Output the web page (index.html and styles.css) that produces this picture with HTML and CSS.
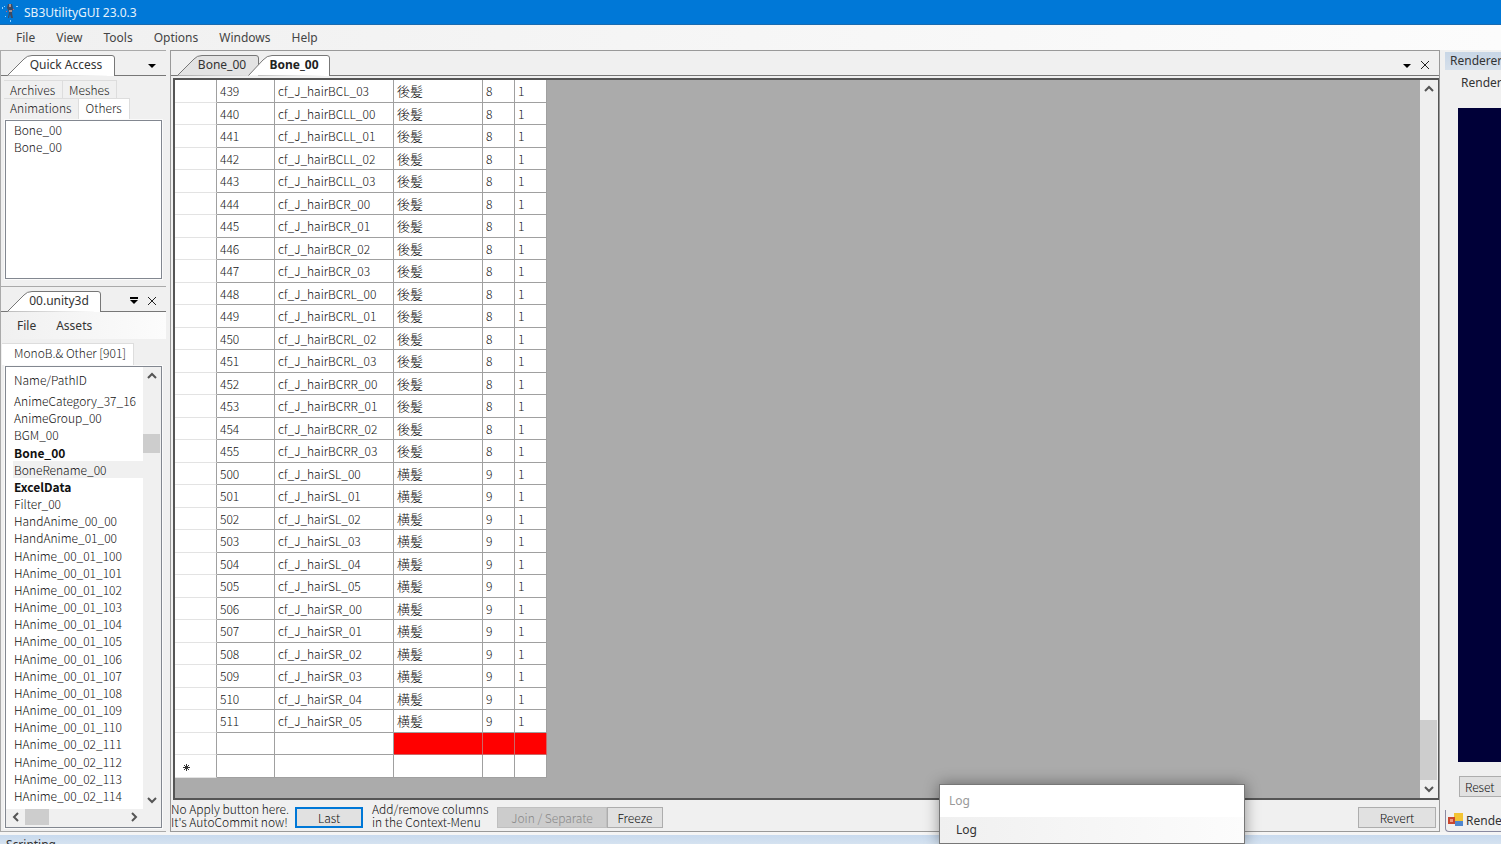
FILE: index.html
```html
<!DOCTYPE html>
<html lang="en">
<head>
  <meta charset="UTF-8">
  <meta name="viewport" content="width=device-width, initial-scale=1.0">
  <title>SB3UtilityGUI 23.0.3</title>
  <link rel="stylesheet" href="styles.css">
</head>
<body>
  <header class="titlebar">
    <svg class="app-icon" width="18" height="22" viewBox="0 0 18 22">
      <path d="M8 3h4l1 4-1 5 1 5h-2l-1-4-1 4H8l1-6-2-4z" fill="#3d4a63"/>
      <path d="M9 3h2v3H9zM9 9h3v2H9z" fill="#a98f8a"/>
      <path d="M2 6h1v2H2zM4 5h1v1H4zM16 5h2v1h-2zM10 19h1v2h-1zM5 15h1v1H5z" fill="#8fd0ff"/>
      <path d="M13 8h1v1h-1zM6 10h1v1H6z" fill="#d8596b"/>
    </svg>
    <h1>SB3UtilityGUI 23.0.3</h1>
  </header>

  <nav class="menubar">
    <button>File</button>
    <button>View</button>
    <button>Tools</button>
    <button>Options</button>
    <button>Windows</button>
    <button>Help</button>
  </nav>

  <main class="workspace">
    <!-- Left side: quick access and opened file -->
    <aside class="left">
      <section class="dock quick">
        <div class="dock-tabs">
          <button class="doc-tab">
            <svg class="tab-shape" width="108" height="21" viewBox="0 0 108 21"><path d="M.5 20.5 17 4Q20 .5 25 .5H105Q107.500 .5 107.500 3V21" /></svg>
            <span>Quick Access</span>
          </button>
          <div class="dock-tools">
            <button aria-label="Window list"><svg width="10" height="10"><path d="M1 4h8L5 8z"/></svg></button>
          </div>
        </div>
        <div class="mini-tabs">
          <button>Archives</button><button>Meshes</button>
        </div>
        <div class="mini-tabs second">
          <button>Animations</button><button class="active">Others</button>
        </div>
        <ul class="listbox quick-list">
          <li>Bone_00</li>
          <li>Bone_00</li>
        </ul>
      </section>

      <section class="dock file">
        <div class="dock-tabs">
          <button class="doc-tab">
            <svg class="tab-shape" width="94" height="21" viewBox="0 0 94 21"><path d="M.5 20.5 17 4Q20 .5 25 .5H91Q93.500 .5 93.500 3V21" /></svg>
            <span>00.unity3d</span>
          </button>
          <div class="dock-tools">
            <button aria-label="Window list"><svg width="10" height="10"><path d="M1 1h8v2H1zM1 4h8L5 8z"/></svg></button>
            <button aria-label="Close"><svg width="10" height="10"><path class="line" d="M1 1l8 8M9 1l-8 8"/></svg></button>
          </div>
        </div>
        <nav class="file-menu">
          <button>File</button>
          <button>Assets</button>
        </nav>
        <div class="mini-tabs page">
          <button class="active">MonoB.&amp; Other [901]</button>
        </div>
        <div class="listbox asset-box">
          <div class="asset-view">
            <div class="asset-head">Name/PathID</div>
            <ul class="asset-list" id="assetList"></ul>
          </div>
          <div class="vscroll">
            <button aria-label="Up"><svg width="10" height="8"><path class="arrow" d="M1 6l4-4 4 4"/></svg></button>
            <div class="track asset-track"><div class="thumb"></div></div>
            <button aria-label="Down"><svg width="10" height="8"><path class="arrow" d="M1 2l4 4 4-4"/></svg></button>
          </div>
          <div class="hscroll">
            <button aria-label="Left"><svg width="8" height="10"><path class="arrow" d="M6 1L2 5l4 4"/></svg></button>
            <div class="track"><div class="thumb"></div></div>
            <button aria-label="Right"><svg width="8" height="10"><path class="arrow" d="M2 1l4 4-4 4"/></svg></button>
          </div>
        </div>
      </section>
    </aside>

    <!-- Centre: spreadsheet -->
    <section class="document">
      <div class="dock-tabs">
        <button class="doc-tab inactive">
          <svg class="tab-shape" width="82" height="21" viewBox="0 0 82 21"><path d="M.5 20.5 17 4Q20 .5 25 .5H79Q81.500 .5 81.500 3V21" /></svg>
          <span>Bone_00</span>
        </button>
        <button class="doc-tab current">
          <svg class="tab-shape" width="82" height="21" viewBox="0 0 82 21"><path d="M.5 20.5 15 5Q19 .5 24 .5H79Q81.500 .5 81.500 3V21" /></svg>
          <span>Bone_00</span>
        </button>
        <div class="dock-tools">
          <button aria-label="Window list"><svg width="10" height="10"><path d="M1 4h8L5 8z"/></svg></button>
          <button aria-label="Close"><svg width="10" height="10"><path class="line" d="M1 1l8 8M9 1l-8 8"/></svg></button>
        </div>
      </div>

      <div class="grid-box">
        <div class="grid-view">
          <table class="grid">
            <colgroup>
              <col class="c-head"><col class="c-id"><col class="c-name"><col class="c-part"><col class="c-num"><col class="c-num">
            </colgroup>
            <tbody id="gridBody"></tbody>
          </table>
        </div>
        <div class="vscroll wide">
          <button aria-label="Up"><svg width="10" height="8"><path class="arrow" d="M1 6l4-4 4 4"/></svg></button>
          <div class="track grid-track"><div class="thumb"></div></div>
          <button aria-label="Down"><svg width="10" height="8"><path class="arrow" d="M1 2l4 4 4-4"/></svg></button>
        </div>
      </div>

      <div class="actions">
        <p class="note">No Apply button here.<br>It's AutoCommit now!</p>
        <button class="btn focused">Last</button>
        <p class="note columns">Add/remove columns<br>in the Context-Menu</p>
        <button class="btn join" disabled>Join / Separate</button>
        <button class="btn freeze">Freeze</button>
        <button class="btn revert">Revert</button>
      </div>
    </section>

    <!-- Right side: renderer, runs past the window edge -->
    <aside class="right">
      <h2>Renderer</h2>
      <p class="render-label">Renderer</p>
      <div class="viewport"></div>
      <button class="btn reset">Reset</button>
      <button class="render-tab">
        <svg width="16" height="15" viewBox="0 0 16 15">
          <path d="M6 0h9v8H6z" fill="#f3c433"/>
          <path d="M7 8h8v5H7z" fill="#4f86cf"/>
          <path d="M0 4h7v7H0z" fill="#c9472f"/>
          <path d="M2 6h3v3H2z" fill="#ef9a84"/>
        </svg>
        <span>Renderer</span>
      </button>
    </aside>
  </main>

  <footer class="statusbar">Scripting</footer>

  <div class="log-popup">
    <div class="log-title">Log</div>
    <button>Log</button>
  </div>

  <script src="script.js"></script>
</body>
</html>
```

FILE: styles.css
```css
* {
  box-sizing: border-box;
}

body {
  margin: 0;
  height: 100vh;
  display: flex;
  flex-direction: column;
  overflow: hidden;
  background: #f0f0f0;
  color: #333;
  font: 12px "Noto Sans", "Open Sans", sans-serif;
}

h1, h2, p, ul {
  margin: 0;
  padding: 0;
}

h1, h2 {
  font-size: 12px;
  font-weight: normal;
}

ul {
  list-style: none;
}

button {
  padding: 0;
  border: none;
  background: none;
  color: inherit;
  font: inherit;
  white-space: nowrap;
}

svg {
  display: block;
}

.line {
  fill: none;
  stroke: #222;
}

.arrow {
  fill: none;
  stroke: #555;
  stroke-width: 2;
}

/* Title bar and menu */
.titlebar {
  flex: none;
  height: 25px;
  display: flex;
  align-items: center;
  gap: 6px;
  background: #0078d7;
  border-bottom: 1px solid #1a6bb0;
  color: #e6f2fc;
}

.menubar {
  flex: none;
  height: 25px;
  display: flex;
  align-items: center;
  gap: 21px;
  padding-left: 16px;
  background: linear-gradient(90deg, #f0f0f0, #fcfcfc);
  color: #444;
}

.workspace {
  flex: 1;
  min-height: 0;
  display: flex;
}

/* Dock tabs */
.dock-tabs {
  flex: none;
  display: flex;
  height: 25px;
  padding: 4px 0 0 6px;
  border-bottom: 1px solid #777;
}

.doc-tab {
  position: relative;
  height: 21px;
  padding: 0 12px 2px 26px;
}

.doc-tab span {
  position: relative;
}

.tab-shape {
  position: absolute;
  left: 0;
  top: 0;
  fill: #fff;
  stroke: #777;
}

.doc-tab.inactive .tab-shape {
  fill: #e3e3e3;
}

.doc-tab.current {
  font-weight: bold;
  color: #222;
}

.dock-tools {
  display: flex;
  align-items: center;
  gap: 8px;
  margin-left: auto;
  padding-right: 9px;
}

/* Left side */
.left {
  flex: none;
  width: 170px;
  display: flex;
  flex-direction: column;
  padding-right: 4px;
}

.dock {
  display: flex;
  flex-direction: column;
  border: 1px solid #aaa;
  border-width: 1px 0 1px 1px;
}

.quick {
  height: 237px;
}

.quick .doc-tab {
  width: 108px;
  padding: 0 0 2px 10px;
}

.file {
  flex: 1;
  min-height: 0;
  border-top: none;
}

.file .doc-tab {
  width: 94px;
  padding: 0 0 2px 10px;
}

.mini-tabs {
  flex: none;
  display: flex;
  height: 18px;
  margin: 4px 0 0 3px;
}

.mini-tabs button {
  padding: 0 7px 0 6px;
  border: 1px solid #ddd;
  border-width: 1px 1px 0 0;
  font-family: "Noto Sans CJK JP", sans-serif;
  font-weight: 300;
  line-height: 18px;
  color: #222;
}

.mini-tabs.second {
  height: 22px;
  margin-top: 0;
  align-items: flex-end;
}

.mini-tabs.second button {
  height: 22px;
  padding-bottom: 4px;
}

.mini-tabs.second button.active,
.mini-tabs.page button {
  padding-bottom: 5px;
  background: #fff;
}

.mini-tabs.page {
  height: 22px;
  margin: 4px 0 0 1px;
}

.mini-tabs.page button {
  padding-left: 12px;
}

.listbox {
  border: 1px solid #828790;
  outline: 1px solid #fafafa;
  background: #fff;
  margin: 0 4px;
  font-family: "Noto Sans CJK JP", sans-serif;
  font-weight: 300;
  color: #111;
}

.quick-list {
  height: 159px;
  padding: 0 8px;
  line-height: 17px;
}

.file-menu {
  flex: none;
  height: 27px;
  display: flex;
  align-items: center;
  gap: 20px;
  padding-left: 16px;
  background: linear-gradient(90deg, #f0f0f0, #fcfcfc);
}

.asset-box {
  flex: 1;
  min-height: 0;
  display: grid;
  grid-template-columns: 1fr 18px;
  grid-template-rows: 1fr 18px;
  margin: 1px 4px 3px;
}

.asset-view {
  display: flex;
  flex-direction: column;
  padding-bottom: 5px;
}

.asset-head {
  padding: 3px 8px;
  line-height: 19px;
}

.asset-list {
  flex: 1;
  display: flex;
  flex-direction: column;
  justify-content: space-between;
  padding-left: 7px;
  line-height: 17px;
}

.asset-list li {
  padding-left: 1px;
  white-space: nowrap;
}

.asset-list .open {
  font-weight: bold;
}

.asset-list .selected {
  background: #f0f0f0;
}

/* Scroll bars */
.vscroll,
.hscroll {
  display: flex;
  background: #f0f0f0;
}

.vscroll {
  flex-direction: column;
  padding-right: 1px;
}

.vscroll button,
.hscroll button {
  flex: none;
  display: flex;
  align-items: center;
  justify-content: center;
}

.vscroll button {
  height: 18px;
}

.hscroll button {
  width: 18px;
}

.hscroll {
  grid-column: 1 / -1;
  padding: 0 18px 2px 1px;
}

.track {
  flex: 1;
  display: flex;
}

.thumb {
  background: #cdcdcd;
}

.hscroll .thumb {
  width: 24px;
}

.asset-track .thumb {
  width: 100%;
  height: 19px;
  margin-top: 49px;
}

.grid-track {
  align-items: flex-end;
}

.grid-track .thumb {
  width: 100%;
  height: 60px;
}

.vscroll.wide {
  width: 18px;
}

/* Spreadsheet */
.document {
  flex: 1;
  min-width: 0;
  display: flex;
  flex-direction: column;
  border: 1px solid #999;
}

.document .doc-tab.inactive {
  width: 82px;
  padding: 0 0 2px 8px;
}

.document .doc-tab.current {
  width: 82px;
  margin-left: -11px;
  padding: 0 0 2px 10px;
}

.grid-box {
  flex: 1;
  min-height: 0;
  display: flex;
  margin: 2px 0 0 2px;
  border: 2px solid #555;
  border-width: 2px 1px 2px 2px;
}

.grid-view {
  flex: 1;
  overflow: hidden;
  background: #ababab;
}

.grid {
  table-layout: fixed;
  width: 372px;
  border-spacing: 0;
  background: #fff;
  font-family: "Noto Sans CJK JP", sans-serif;
  font-weight: 300;
  color: #111;
}

.c-head { width: 42px; }
.c-id { width: 58px; }
.c-name { width: 119px; }
.c-part { width: 89px; }
.c-num { width: 32px; }

.grid td,
.grid th {
  height: 23px;
  padding: 0 3px;
  border: 1px solid #a0a0a0;
  border-width: 0 1px 1px 0;
  line-height: 20px;
  text-align: left;
  white-space: nowrap;
}

.grid tr:nth-child(even) td,
.grid tr:nth-child(even) th {
  height: 22px;
}

.grid th {
  padding: 3px 0 0 8px;
  border-bottom-color: #e3e3e3;
}

.grid .bad {
  background: #f00;
  border-color: #c66;
}

.grid .part {
  font-size: 13px;
}

/* Buttons under the spreadsheet */
.actions {
  flex: none;
  height: 31px;
  display: flex;
  align-items: center;
  padding-top: 3px;
  font-family: "Noto Sans CJK JP", sans-serif;
  font-weight: 300;
  color: #111;
}

.note {
  width: 124px;
  padding-bottom: 5px;
  line-height: 13px;
  white-space: nowrap;
}

.btn {
  height: 21px;
  border: 1px solid #adadad;
  background: #e1e1e1;
  font-family: "Noto Sans CJK JP", sans-serif;
  font-weight: 300;
  line-height: 19px;
  color: #111;
}

.btn.focused {
  width: 68px;
  border: 2px solid #0078d7;
  line-height: 17px;
}

.note.columns {
  margin-left: 9px;
  width: 125px;
}

.btn.join {
  width: 110px;
  border-color: #bfbfbf;
  background: #ccc;
  color: #888;
}

.btn.freeze {
  width: 56px;
}

.btn.revert {
  width: 78px;
  margin: 0 3px 0 auto;
}

/* Renderer */
.right {
  flex: none;
  width: 61px;
  display: flex;
  flex-direction: column;
  align-items: flex-start;
  padding-left: 5px;
  overflow: hidden;
}

.right h2 {
  flex: none;
  width: 100%;
  height: 18px;
  margin-top: 2px;
  padding-left: 5px;
  background: linear-gradient(#c8d6e6, #d6e0eb);
  line-height: 18px;
}

.render-label {
  margin-left: 16px;
  padding: 3px 0;
  line-height: 20px;
}

.viewport {
  flex: 1;
  width: 100%;
  margin: 12px 0 14px 13px;
  background: #000038;
}

.btn.reset {
  flex: none;
  width: 68px;
  margin-left: 14px;
  padding-left: 5px;
  text-align: left;
}

.render-tab {
  flex: none;
  height: 22px;
  display: flex;
  align-items: center;
  gap: 2px;
  margin-top: 13px;
  padding-left: 2px;
  border: 1px solid #8a8aa0;
  border-width: 0 0 1px 1px;
  border-bottom-left-radius: 4px;
}

.statusbar {
  flex: none;
  height: 12px;
  border-top: 3px solid #f5f5f5;
  padding: 4px 0 0 6px;
  background: linear-gradient(#c8daee, #d5e2f0);
  line-height: 12px;
  overflow: hidden;
}

/* Log window, slides over the bottom edge */
.log-popup {
  position: absolute;
  right: 256px;
  bottom: 0;
  width: 306px;
  height: 60px;
  display: flex;
  flex-direction: column;
  border: 1px solid #777;
  background: #fff;
  box-shadow: 0 0 14px rgba(0, 0, 0, 0.4);
}

.log-title {
  height: 32px;
  padding-left: 9px;
  line-height: 31px;
  color: #999;
}

.log-popup button {
  flex: 1;
  padding: 0 0 2px 16px;
  background: linear-gradient(90deg, #f0f0f0, #fcfcfc);
  text-align: left;
}
```

FILE: script.js
```js
const assets = [
  'AnimeCategory_37_16', 'AnimeGroup_00', 'BGM_00', 'Bone_00', 'BoneRename_00',
  'ExcelData', 'Filter_00', 'HandAnime_00_00', 'HandAnime_01_00'
];
for (let i = 100; i <= 114; i++) {
  assets.push('HAnime_00_' + (i <= 110 ? '01_' : '02_') + i);
}

const assetList = document.getElementById('assetList');
assets.forEach(name => {
  const li = document.createElement('li');
  li.textContent = name;
  if (name === 'Bone_00' || name === 'ExcelData') li.className = 'open';
  if (name === 'BoneRename_00') li.className = 'selected';
  assetList.appendChild(li);
});

// first id, part, category, bone names
const groups = [
  [439, '後髪', 8, ['BCL_03']],
  [440, '後髪', 8, ['BCLL_00', 'BCLL_01', 'BCLL_02', 'BCLL_03']],
  [444, '後髪', 8, ['BCR_00', 'BCR_01', 'BCR_02', 'BCR_03']],
  [448, '後髪', 8, ['BCRL_00', 'BCRL_01', 'BCRL_02', 'BCRL_03']],
  [452, '後髪', 8, ['BCRR_00', 'BCRR_01', 'BCRR_02', 'BCRR_03']],
  [500, '横髪', 9, ['SL_00', 'SL_01', 'SL_02', 'SL_03', 'SL_04', 'SL_05']],
  [506, '横髪', 9, ['SR_00', 'SR_01', 'SR_02', 'SR_03', 'SR_04', 'SR_05']]
];

let rows = '';
groups.forEach(([first, part, category, bones]) => {
  bones.forEach((bone, i) => {
    rows += `<tr><th></th><td>${first + i}</td><td>cf_J_hair${bone}</td>` +
      `<td class="part" lang="ja">${part}</td><td>${category}</td><td>1</td></tr>`;
  });
});

// invalid row, then the row for a new record
const star = '<svg width="7" height="7"><path d="M3.500 0v7M0 3.500h7M1 1l5 5M6 1l-5 5" stroke="#333" fill="none"/></svg>';
rows += '<tr><th></th><td></td><td></td><td class="bad"></td><td class="bad"></td><td class="bad"></td></tr>';
rows += `<tr><th>${star}</th><td></td><td></td><td></td><td></td><td></td></tr>`;
document.getElementById('gridBody').innerHTML = rows;
```
